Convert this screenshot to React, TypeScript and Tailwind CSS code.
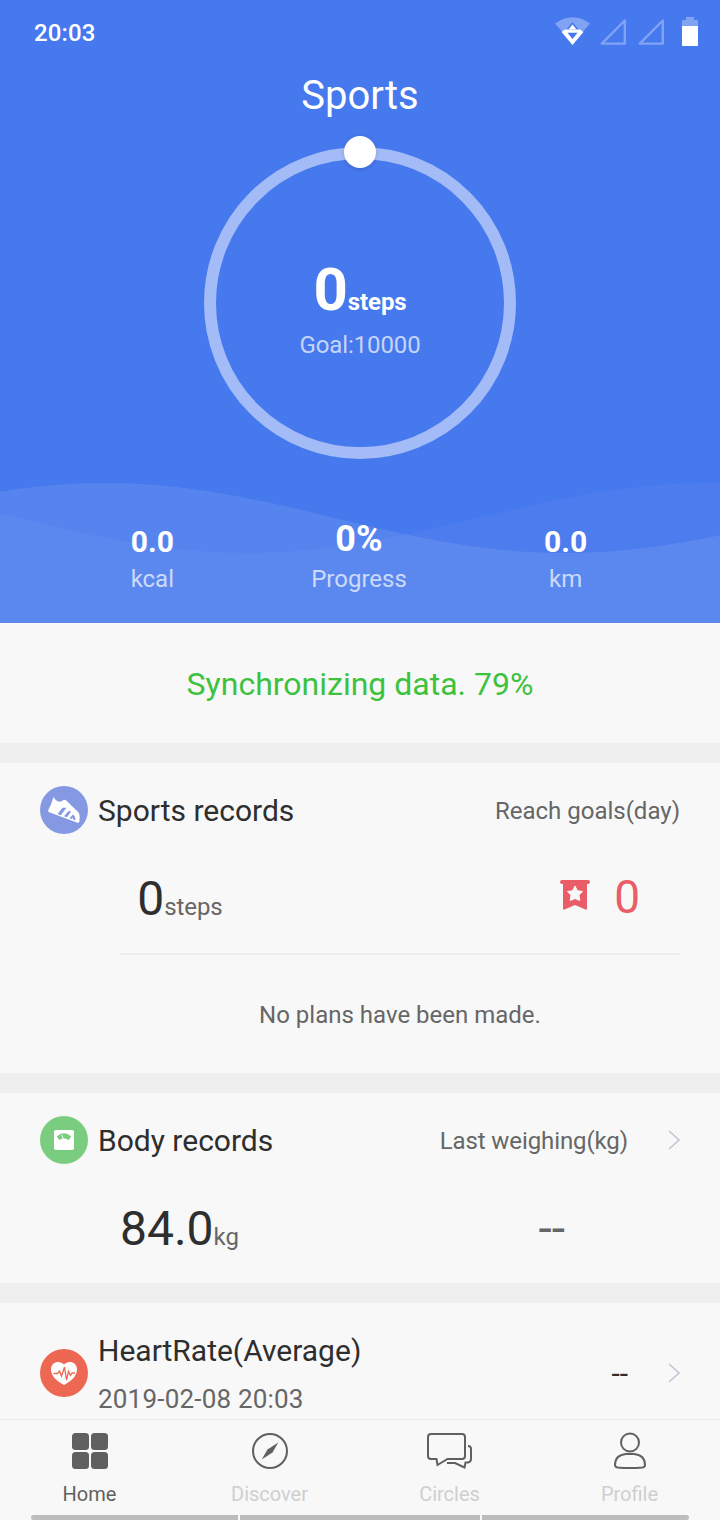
import React from 'react';
import clsx from 'clsx';

const WAVE_WIDTH = 720;

// Closed sine area: crest at y=0, trough at y=70, filled down to y=140
const wavePath = (crestX: number) => {
  const points: string[] = [];
  for (let x = 0; x <= WAVE_WIDTH; x += 6) {
    const y = 35 - 35 * Math.cos((Math.PI * (x - crestX)) / 460);
    points.push(`${x} ${y.toFixed(2)}`);
  }
  return `M${points.join('L')}L720 140L0 140Z`;
};

const StatusBar = () => (
  <div className="flex h-[66px] items-center justify-between pl-[34px] pr-[22px] shrink-0">
    <span className="text-2xl font-medium leading-none tracking-[0.1px]">20:03</span>
    <svg className="h-[30px] w-[144px] overflow-visible" viewBox="0 0 144 30">
      <path d="M1 5.500Q18.500 -7 36 5.500L29 13.500H8Z" fill="#fff" fillOpacity=".32" />
      <path d="M18.500 4L25 12H12Z" fill="#4678ee" />
      <path d="M18.500 6.500L22.500 11.500H14.500Z" fill="#fff" />
      <path d="M11 11.500H26L29.500 14L18.500 27L7.500 14Z" fill="#fff" />
      <path d="M13.500 14.800H23.500L18.500 21Z" fill="#4678ee" />
      <g fill="none" stroke="#fff" strokeOpacity=".32" strokeWidth="2.400" strokeLinejoin="round">
        <path d="M70.800 2.500V25.600H47.800Z" />
        <path d="M108.800 2.500V25.600H85.800Z" />
      </g>
      <path d="M128 8V3Q128 2 129 2H132V-1H140V2H143Q144 2 144 3V8Z" fill="#fff" fillOpacity=".32" />
      <path d="M128 8H144V27Q144 28 143 28H129Q128 28 128 27Z" fill="#fff" />
    </svg>
  </div>
);

const StepRing = () => (
  <div className="relative mx-auto mt-[13px] flex size-[324px] flex-col items-center shrink-0">
    <svg className="absolute inset-0 size-[324px] overflow-visible" viewBox="0 0 324 324">
      <circle cx="162" cy="165" r="150" fill="none" stroke="#fff" strokeOpacity=".5" strokeWidth="12" />
      <circle cx="162" cy="14" r="16" fill="#fff" className="drop-shadow-sm" />
    </svg>
    <div className="relative mt-[117px] flex h-[70px] items-baseline font-bold leading-[70px]">
      <span className="text-[60px]">0</span>
      <span className="text-2xl tracking-[-0.1px]">steps</span>
    </div>
    <div className="relative mt-[5px] text-2xl leading-[30px] tracking-[-0.1px] text-white/70">Goal:10000</div>
  </div>
);

const stats = [
  { value: '0.0', label: 'kcal', big: false },
  { value: '0%', label: 'Progress', big: true },
  { value: '0.0', label: 'km', big: false },
];

const SportsHero = () => (
  <header className="relative flex h-[623px] flex-col bg-[#4678ee] text-white shrink-0">
    <svg className="absolute bottom-0 left-0 h-[140px] w-full" viewBox="0 0 720 140">
      <path d={wavePath(105)} fill="#fff" fillOpacity=".09" />
      <path d={wavePath(708)} fill="#fff" fillOpacity=".035" />
    </svg>
    <StatusBar />
    <h1 className="h-[59px] text-center text-[40px] leading-[60px] shrink-0">Sports</h1>
    <StepRing />
    <div className="relative mt-[58px] grid grid-cols-3 pl-[49px] pr-[51px] text-center">
      {stats.map(({ value, label, big }) => (
        <div key={label}>
          <div className={clsx('h-[44px] font-bold', big ? 'text-[36px] leading-[38px]' : 'text-[30px] leading-[43px]')}>
            {value}
          </div>
          <div className="text-2xl leading-[30px] text-white/70">{label}</div>
        </div>
      ))}
    </div>
  </header>
);

const ShoeIcon = () => (
  <svg className="size-12 shrink-0" viewBox="0 0 48 48">
    <circle cx="24" cy="24" r="24" fill="#8599e3" />
    <path d="M13.500 11L15.500 13.800Q18 16.200 21 15.500L23.500 14Q25 13.500 26 14.300L35.500 23.500Q39.500 26.500 39.700 30.500L39.500 35Q39.200 37.300 37.500 36.700L8.500 26Q7.800 25.300 8.500 23.500L11 18.500Z" fill="#fff" />
    <path
      d="M17.500 28L22.500 21.800H26.500L20.800 29.200ZM24 30.200L28.300 25.200H31.300L27 31.200ZM29.500 32.200L33 28.500Q35.500 30 35.500 34.400L33 33.300V31.500L31.800 32.900Z"
      fill="#8599e3"
    />
  </svg>
);

const ScaleIcon = () => (
  <svg className="size-12 shrink-0" viewBox="0 0 48 48">
    <circle cx="24" cy="24" r="24" fill="#7acd7e" />
    <rect x="14" y="14" width="20" height="20" rx="2" fill="#fff" />
    <path d="M16.800 20.500Q24 14 31.200 20.500L28.700 24Q26 22 24 22.500Q21.500 22 19.300 24Z" fill="#7acd7e" />
    <path d="M21.700 19L23.300 22.500" stroke="#fff" />
  </svg>
);

const HeartIcon = () => (
  <svg className="size-12 shrink-0" viewBox="0 0 48 48">
    <circle cx="24" cy="24" r="24" fill="#ed6853" />
    <path d="M24 36C20 34 11 28.500 11 20.500C11 12.500 20 11 24 15.500C28 11 37 12.500 37 20.500C37 28.500 28 34 24 36Z" fill="#fff" />
    <path d="M13.500 24.500H17.500L19.500 22L21.500 27L24.500 18L26.500 31L28.500 22.500L30.500 26.500L32 24H35" fill="none" stroke="#ed6853" strokeWidth="1.300" />
  </svg>
);

const MedalIcon = () => (
  <svg className="mb-1 h-[30px] w-[30px] shrink-0" viewBox="0 0 30 30">
    <path d="M2 0H28Q30 0 30 2Q30 4 28 4H27V28.500Q27 30 25.500 29.500L15 25L4.500 29.500Q3 30 3 28.500V4H2Q0 4 0 2Q0 0 2 0Z" fill="#ea5d68" />
    <path d="M15 6L17.400 10.700L22.500 11.500L19 15.200L19.800 20.500L15 18.500L10.200 20.500L11 15.200L7.500 11.500L12.600 10.700Z" fill="#f8f8f8" stroke="#f8f8f8" strokeLinejoin="round" />
  </svg>
);

const Chevron = () => (
  <svg className="h-5 w-3 shrink-0" viewBox="0 0 12 20" fill="none" stroke="#bfc6d8" strokeWidth="1.600">
    <path d="M1 1L11 10L1 19" />
  </svg>
);

const SportsRecords = () => (
  <section className="h-[310px] px-10 pt-[23px] shrink-0">
    <div className="flex h-12 items-center">
      <ShoeIcon />
      <h2 className="ml-[10px] pt-[2px] text-[30px] leading-[48px] text-[#2e2e2e]">Sports records</h2>
      <span className="ml-auto pt-[2px] text-2xl">Reach goals(day)</span>
    </div>
    <div className="ml-20 flex h-[121px] border-b-2 border-[#eeeeee]">
      <div className="mt-[35px] flex h-[60px] w-[120px] items-baseline justify-center leading-[60px]">
        <span className="text-[48px] text-[#2e2e2e]">0</span>
        <span className="text-2xl tracking-[-0.1px]">steps</span>
      </div>
      <div className="ml-auto mr-10 mt-[33px] flex h-[60px] items-center gap-6 text-[#ea5d68]">
        <MedalIcon />
        <span className="text-[46px] leading-[60px]">0</span>
      </div>
    </div>
    <p className="ml-20 pt-[45px] text-center text-2xl leading-[30px]">No plans have been made.</p>
  </section>
);

const BodyRecords = () => (
  <section className="h-[190px] px-10 pt-[23px] shrink-0">
    <div className="flex h-12 items-center">
      <ScaleIcon />
      <h2 className="ml-[10px] pt-[2px] text-[30px] leading-[48px] text-[#2e2e2e]">Body records</h2>
      <span className="ml-auto mr-10 pt-[2px] text-2xl tracking-[-0.1px]">Last weighing(kg)</span>
      <Chevron />
    </div>
    <div className="ml-20 mt-[35px] flex h-[60px] items-baseline leading-[60px]">
      <span className="text-[48px] text-[#2e2e2e]">84.0</span>
      <span className="text-2xl">kg</span>
      <span className="ml-auto mr-[115px] text-[48px]">--</span>
    </div>
  </section>
);

const HeartRate = () => (
  <section className="flex h-[116px] items-center px-10 pt-6 shrink-0">
    <HeartIcon />
    <div className="ml-[10px] pt-[2px]">
      <h2 className="text-[30px] leading-[50px] text-[#2e2e2e]">HeartRate(Average)</h2>
      <div className="text-[26px] leading-[46px] tracking-[0.2px]">2019-02-08 20:03</div>
    </div>
    <span className="ml-auto mr-10 pt-[2px] text-[30px] leading-[48px] text-[#2e2e2e]">--</span>
    <Chevron />
  </section>
);

const tabs = [
  {
    label: 'Home',
    icon: (
      <g fill="#606060" stroke="none">
        <rect x="6" y="2" width="17" height="17" rx="3.500" />
        <rect x="25" y="2" width="17" height="17" rx="3.500" />
        <rect x="6" y="21" width="17" height="17" rx="3.500" />
        <rect x="25" y="21" width="17" height="17" rx="3.500" />
      </g>
    ),
  },
  {
    label: 'Discover',
    icon: (
      <>
        <circle cx="24" cy="20" r="17" />
        <path d="M32.300 11.500L26.500 21.500L15.700 28.500L21.500 18.500Z" fill="#606060" stroke="none" />
      </>
    ),
  },
  {
    label: 'Circles',
    icon: (
      <>
        <path d="M5 3H36Q39 3 39 6V25Q39 28 36 28H21.500L11.500 34L10.500 28H5Q2 28 2 25V6Q2 3 5 3Z" />
        <path d="M42 15Q45 15 45 18V28Q45 31 42 31.500H39.500L38.500 36.500L29 32H21" />
      </>
    ),
  },
  {
    label: 'Profile',
    icon: (
      <>
        <circle cx="24" cy="11.500" r="9" />
        <path d="M20 23H28Q39 24 39 34Q39 36 36.500 36.500Q24 37.500 11.500 36.500Q9 36 9 34Q9 24 20 23Z" />
      </>
    ),
  },
];

const TabBar = () => (
  <nav className="flex h-[101px] flex-col border-t border-[#ebebeb] shrink-0">
    <div className="grid h-[95px] grid-cols-4">
      {tabs.map(({ label, icon }, i) => (
        <div key={label} className="flex flex-col items-center pt-[11px]">
          <svg className="h-10 w-12" viewBox="0 0 48 40" fill="none" stroke="#606060" strokeWidth="2">
            {icon}
          </svg>
          <span className={clsx('mt-[11px] pr-px text-xl leading-6', i === 0 ? 'text-[#606060]' : 'text-[#cfcfcf]')}>
            {label}
          </span>
        </div>
      ))}
    </div>
    <div className="mx-[31px] flex h-[5px] gap-[2px] overflow-hidden">
      <div className="w-[207px] rounded-l-full bg-[#bdbdbd]" />
      <div className="w-[240px] bg-[#bdbdbd]" />
      <div className="w-[207px] rounded-r-full bg-[#bdbdbd]" />
    </div>
  </nav>
);

const Gap = () => <div className="h-5 bg-[#efefef] shrink-0" />;

const App = () => {
  return (
    <div className="flex h-[1520px] w-[720px] flex-col overflow-hidden bg-[#f8f8f8] font-[Roboto,sans-serif] text-[#666666]">
      <SportsHero />
      <div className="h-[120px] text-center text-[32px] leading-[122px] text-[#3dc23d] shrink-0">
        Synchronizing data. 79%
      </div>
      <Gap />
      <SportsRecords />
      <Gap />
      <BodyRecords />
      <Gap />
      <HeartRate />
      <TabBar />
    </div>
  );
};

export default App;
